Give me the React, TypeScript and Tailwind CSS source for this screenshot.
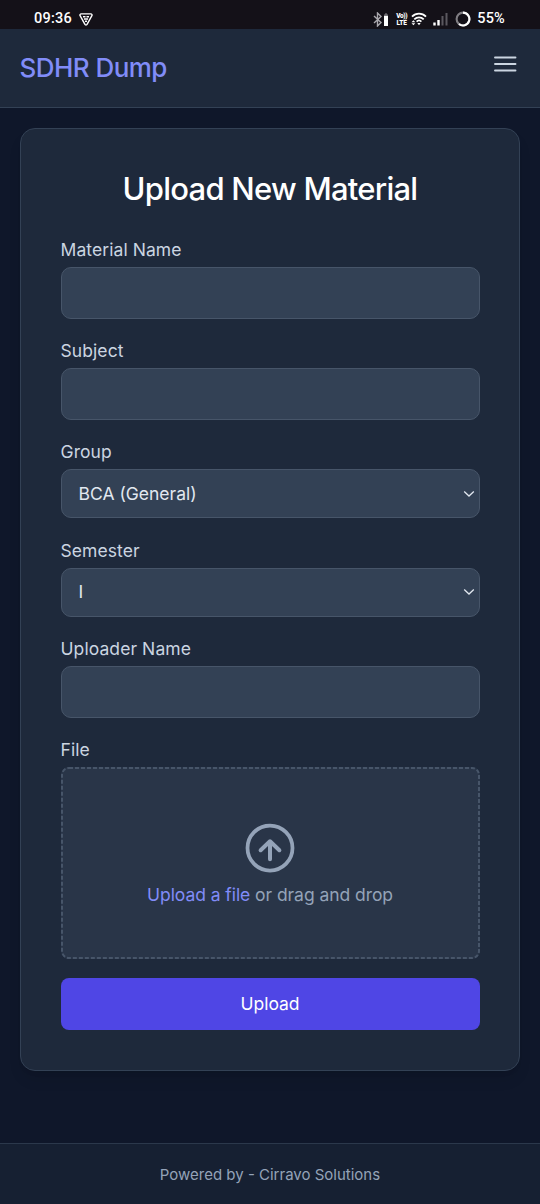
import React, { useState } from "react";

type FieldProps = {
  label: string;
  children: React.ReactNode;
};

const Field = ({ label, children }: FieldProps) => {
  return (
    <div className="flex flex-col">
      <label className="mb-[5px] text-[17.5px] leading-[25px] font-[380] tracking-[0.08px] text-[#cbd5e1]">
        {label}
      </label>
      {children}
    </div>
  );
};

const TextInput = () => {
  return (
    <input
      type="text"
      className="h-[52px] w-full rounded-[10px] border border-[#475569] bg-[#334155] px-[17px] text-[17.5px] text-[#e2e8f0] outline-none"
    />
  );
};

const SelectInput = ({ options }: { options: string[] }) => {
  const [value, setValue] = useState<string>(options[0]);

  return (
    <div className="relative">
      <select
        value={value}
        onChange={(e) => setValue(e.target.value)}
        className="block h-[49px] w-full appearance-none rounded-[10px] border border-[#475569] bg-[#334155] px-[17px] text-[17.5px] font-[380] text-[#e2e8f0] outline-none"
      >
        {options.map((option) => (
          <option key={option}>{option}</option>
        ))}
      </select>
      <svg
        className="pointer-events-none absolute top-[20.5px] right-[5px] h-[8px] w-[12px]"
        viewBox="0 0 12 8"
        fill="none"
        stroke="#e2e8f0"
        strokeWidth="1.3"
      >
        <path d="M1.2 1.6 6 6l4.8-4.4" />
      </svg>
    </div>
  );
};

const DropZone = () => {
  return (
    <div className="relative flex h-[192px] flex-col items-center rounded-[8px] bg-[#293548] pt-[51px]">
      <svg className="pointer-events-none absolute inset-0 h-full w-full" fill="none">
        <rect
          x="1"
          y="1"
          rx="7"
          className="h-[190px] w-[calc(100%-2px)]"
          stroke="#475569"
          strokeWidth="2"
          strokeDasharray="4 2"
        />
      </svg>
      <svg width="60" height="60" viewBox="0 0 24 24" fill="none" stroke="#94a3b8" strokeWidth="1.5">
        <circle cx="12" cy="12" r="9" />
        <path
          d="m8.25 12.9L12 9.3l3.75 3.6M12 9.5v7"
          strokeWidth="1.6"
          strokeLinecap="round"
          strokeLinejoin="round"
        />
      </svg>
      <p className="mt-[4px] text-[17.5px] leading-[25px] font-[380] tracking-[-0.06px] text-[#94a3b8]">
        <span className="text-[#818cf8]">Upload a file</span> or drag and drop
      </p>
    </div>
  );
};

const StatusBar = () => {
  return (
    <div className="flex h-[29px] items-end justify-between bg-[#141118] pr-[35px] pb-px pl-[34px] font-[Roboto] text-[14.5px] font-medium text-white">
      <div className="flex items-center gap-[7px]">
        <span className="leading-[18px] tracking-[0.25px]">09:36</span>
        <svg width="14" height="13" viewBox="0 0 14 13" fill="none" stroke="white">
          <path
            d="M2.2.9h9.6c1 0 1.6 1 1.1 1.8L8.2 11.2c-.5 1-1.9 1-2.4 0L1.1 2.7C.6 1.9 1.2.9 2.2.9Z"
            strokeWidth="1.4"
          />
          <path d="M4 3.8h2.5M7.5 3.8H10M5 6h4M6 8.3h2" strokeWidth="1.6" />
        </svg>
      </div>
      <div className="flex items-center">
        <svg width="16" height="15" viewBox="0 0 16 15" fill="none">
          <path d="M1 4 8 10.6 4.500 14V1L8 4.400 1 11" stroke="#aaa8ad" strokeWidth="1.4" />
          <path d="M11 2.5h1.2V1.2h1.6v1.300H15v11.500h-4Z" fill="#77757a" />
          <path d="M11 4h4v10h-4Z" fill="white" />
        </svg>
        <div className="ml-[6px] flex w-[13px] flex-col items-center text-[6.5px] leading-[8px] font-black">
          <span className="-mb-px tracking-[-0.4px]">Vo))</span>
          <span className="tracking-[-0.1px]">LTE</span>
        </div>
        <svg className="ml-[3px]" width="16" height="14" viewBox="0 0 16 14" fill="none" stroke="white">
          <path
            d="M1 4.7C5 .7 11 .7 15 4.7M3.3 7.3c2.7-2.7 6.7-2.7 9.4 0M5.6 9.6c1.4-1.4 3.4-1.4 4.8 0"
            strokeWidth="1.8"
          />
          <path d="m6.3 11 1.7 2.200 1.700-2.200Z" fill="white" stroke="none" />
          <path d="M.5 10.3 2.400 8.300l1.900 2ZM.5 11.300l1.900 2 1.900-2Z" fill="white" stroke="none" />
        </svg>
        <svg className="ml-[6px]" width="15" height="14" viewBox="0 0 15 14">
          <path d="M.3 10.5h2.400V13.500H.3ZM4.300 8h2.400v5.500H4.300Z" fill="white" />
          <path d="M8.500 4h2v9.500h-2ZM12.500 1h2v12.500h-2Z" fill="#5b585f" />
        </svg>
        <svg className="ml-[7px]" width="16" height="16" viewBox="0 0 16 16" fill="none" strokeWidth="2.1">
          <circle cx="8" cy="8" r="6.4" stroke="#807e83" />
          <path d="M8 1.6A6.4 6.4 0 1 1 4 13" stroke="white" />
        </svg>
        <span className="ml-[6px] leading-[18px] tracking-[0.2px]">55%</span>
      </div>
    </div>
  );
};

const App = () => {
  return (
    <div className="flex min-h-[1204px] w-full flex-col bg-[#0f172a] font-[Inter,sans-serif]">
      <StatusBar />

      <header className="flex h-[79px] items-center justify-between border-b border-[#334155] bg-[#1e293b] pr-[23px] pl-[19.5px]">
        <h1 className="mb-px text-[26px] leading-[35px] font-medium tracking-[-0.55px] text-[#818cf8]">
          SDHR Dump
        </h1>
        <button className="mb-[8px]">
          <svg width="24" height="18" viewBox="0 0 24 18" stroke="#cbd5e1" strokeWidth="1.9" strokeLinecap="round">
            <path d="M2 2.5h20.5M2 9h20.5M2 15.5h20.5" />
          </svg>
        </button>
      </header>

      <main className="flex-1 px-[20px] pt-[20px]">
        <div className="rounded-[15px] border border-[#334155] bg-[#1e293b] px-[39.5px] pt-[39px] pb-[40px] shadow-lg">
          <h2 className="text-center text-[31px] leading-[42px] font-medium tracking-[-0.75px] text-white">
            Upload New Material
          </h2>

          <form className="mt-[27px] flex flex-col gap-[19.2px]">
            <Field label="Material Name">
              <TextInput />
            </Field>
            <Field label="Subject">
              <TextInput />
            </Field>
            <Field label="Group">
              <SelectInput options={["BCA (General)"]} />
            </Field>
            <Field label="Semester">
              <SelectInput options={["I"]} />
            </Field>
            <Field label="Uploader Name">
              <TextInput />
            </Field>
            <Field label="File">
              <DropZone />
            </Field>
            <button
              type="button"
              className="h-[52px] w-full rounded-[8px] bg-[#4f46e5] text-[17.5px] text-white"
            >
              Upload
            </button>
          </form>
        </div>
      </main>

      <footer className="flex h-[61px] items-center justify-center border-t border-[#2b384b] bg-[#162032] pt-[2px] text-[15px] font-[380] text-[#94a3b8]">
        Powered by - Cirravo Solutions
      </footer>
    </div>
  );
};

export default App;
